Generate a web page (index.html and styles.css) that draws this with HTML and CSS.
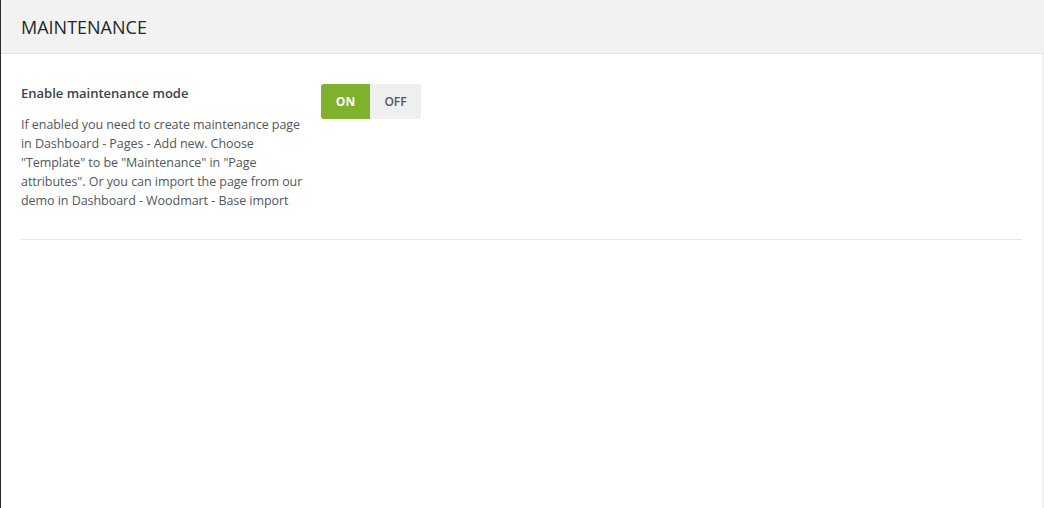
FILE: index.html
```html
<!DOCTYPE html>
<html lang="en">
<head>
    <meta charset="UTF-8">
    <title>Maintenance</title>
    <link rel="stylesheet" href="styles.css">
</head>
<body>
    <div class="panel">
        <div class="panel-header">
            <h2>MAINTENANCE</h2>
        </div>
        <div class="panel-body">
            <div class="option-row">
                <div class="option-info">
                    <div class="option-title">Enable maintenance mode</div>
                    <p class="option-desc">If enabled you need to create maintenance page in Dashboard - Pages - Add new. Choose "Template" to be "Maintenance" in "Page attributes". Or you can import the page from our demo in Dashboard - Woodmart - Base import</p>
                </div>
                <div class="option-control">
                    <div class="switch">
                        <span class="switch-btn active">ON</span>
                        <span class="switch-btn">OFF</span>
                    </div>
                </div>
            </div>
        </div>
    </div>
</body>
</html>
```

FILE: styles.css
```css
body {
    margin: 0;
    padding: 0;
    background: #f1f1f1;
    font-family: 'Open Sans', 'Noto Sans', sans-serif;
    color: #3c434a;
}

.panel {
    height: 508px;
    margin-right: 2px;
    background: #fff;
    border-left: 1px solid #2c2c2c;
    box-sizing: border-box;
}

.panel-header {
    height: 53px;
    display: flex;
    align-items: center;
    padding: 0 20px;
    background: #f2f2f2;
    border-bottom: 1px solid #e3e3e3;
    margin-right: -2px;
}

.panel-header h2 {
    margin: 0;
    font-size: 18px;
    font-weight: 400;
    color: #23282d;
}

.panel-body {
    padding: 30px 20px 0;
}

.option-row {
    display: flex;
    padding-bottom: 29px;
    border-bottom: 1px solid #e5e5e5;
}

.option-info {
    width: 284px;
    padding-right: 16px;
}

.option-title {
    font-size: 13px;
    font-weight: 600;
    line-height: 19px;
    color: #3c434a;
}

.option-desc {
    margin: 12px 0 0;
    font-size: 12.5px;
    line-height: 19px;
    letter-spacing: -0.05px;
    color: #50575e;
}

.switch {
    display: flex;
    width: 100px;
    height: 35px;
    border-radius: 3px;
    overflow: hidden;
    background: #efefef;
}

.switch-btn {
    flex: 1;
    display: flex;
    align-items: center;
    justify-content: center;
    font-size: 12px;
    font-weight: 600;
    color: #555;
}

.switch-btn.active {
    flex: 0 0 49px;
    background: #7eb12c;
    color: #fff;
    font-weight: 700;
}
```
